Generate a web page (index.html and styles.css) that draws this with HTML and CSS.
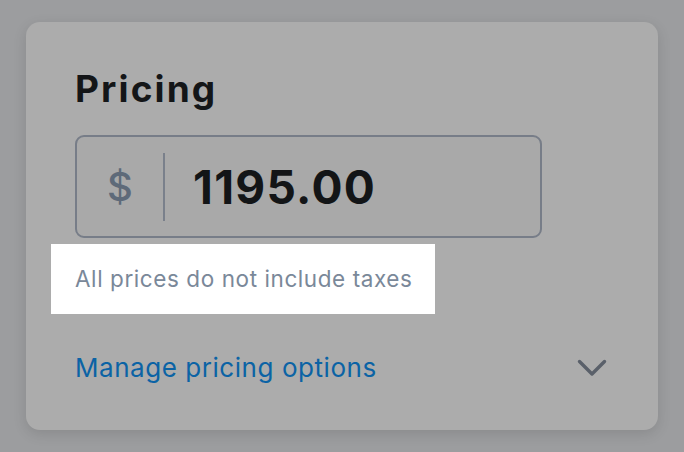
FILE: index.html
```html
<!DOCTYPE html>
<html lang="en">
<head>
<meta charset="utf-8">
<title>Pricing</title>
<link rel="stylesheet" href="styles.css">
</head>
<body>
  <section class="card">
    <h1 class="title">Pricing</h1>
    <div class="price-input">
      <span class="prefix">$</span>
      <span class="divider"></span>
      <span class="value">1195.00</span>
    </div>
    <div class="spotlight">
      <p class="help">All prices do not include taxes</p>
    </div>
    <div class="options">
      <a class="link" href="#">Manage pricing options</a>
      <svg class="chevron" width="30" height="18" viewBox="0 0 30 18" aria-hidden="true">
        <path d="M2.5 2.5 L15 15 L27.5 2.5" fill="none" stroke="currentColor" stroke-width="3.4" stroke-linecap="round" stroke-linejoin="round"/>
      </svg>
    </div>
  </section>
</body>
</html>
```

FILE: styles.css
```css
html, body {
  margin: 0;
  padding: 0;
}

body {
  width: 684px;
  height: 452px;
  background: #9c9d9f;
  padding: 22px 0 0 26px;
  box-sizing: border-box;
  font-family: "Inter", "Liberation Sans", sans-serif;
  overflow: hidden;
}

.card {
  width: 632px;
  height: 408px;
  box-sizing: border-box;
  padding: 44px 51px 0 49px;
  background: #acacac;
  border-radius: 14px;
  box-shadow: 0 4px 14px rgba(0, 0, 0, 0.12);
  display: flex;
  flex-direction: column;
}

.title {
  margin: 0;
  font-size: 37px;
  font-weight: 700;
  line-height: 46px;
  color: #141618;
  letter-spacing: 2.1px;
}

.price-input {
  margin-top: 23px;
  width: 467px;
  height: 103px;
  box-sizing: border-box;
  border: 2px solid #777d88;
  border-radius: 9px;
  background: #a9a9a9;
  display: flex;
  align-items: center;
}

.prefix {
  width: 86px;
  text-align: center;
  font-size: 40px;
  font-weight: 500;
  color: #5e6a79;
}

.divider {
  width: 2px;
  height: 68px;
  background: #7a808b;
}

.value {
  margin-left: 28px;
  font-size: 46px;
  font-weight: 700;
  color: #131517;
  letter-spacing: 1.3px;
}

.spotlight {
  margin: 6px 0 0 -24px;
  width: 384px;
  height: 70px;
  box-sizing: border-box;
  background: #ffffff;
  padding: 0 0 2px 24px;
  display: flex;
  align-items: center;
}

.help {
  margin: 0;
  font-size: 22.5px;
  color: #7a8899;
  letter-spacing: 0.58px;
  white-space: nowrap;
}

.options {
  margin-top: 38px;
  display: flex;
  align-items: center;
  justify-content: space-between;
}

.link {
  font-size: 26px;
  color: #0b63a5;
  text-decoration: none;
  letter-spacing: 0.55px;
}

.chevron {
  color: #5a606a;
  display: block;
}
```
